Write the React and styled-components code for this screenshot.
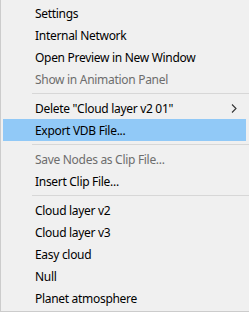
import React from "react";
import styled, { createGlobalStyle } from "styled-components";

const Global = createGlobalStyle`
  html, body { margin: 0; padding: 0; background: #f0f0f0; }
  body { font-family: "Noto Sans", "Open Sans", sans-serif; }
`;

const Menu = styled.div`
  width: 249px;
  height: 312px;
  box-sizing: border-box;
  background: #f0f0f0;
  border-left: 1px solid #cccccc;
  border-bottom: 1px solid #cccccc;
  padding: 2px 3px 2px 2px;
  display: flex;
  flex-direction: column;
`;

const Item = styled.div`
  height: 22px;
  display: flex;
  align-items: center;
  padding-left: 32px;
  padding-right: 8px;
  font-size: 12px;
  letter-spacing: -0.3px;
  color: ${(p) => (p.$disabled ? "#6d6d6d" : "#000000")};
  background: ${(p) => (p.$active ? "#91c9f7" : "transparent")};
  white-space: nowrap;
`;

const Label = styled.span`
  flex: 1;
`;

const Separator = styled.div`
  height: 7px;
  display: flex;
  align-items: center;
  padding-left: 29px;
  margin-right: -3px;
  &::after {
    content: "";
    flex: 1;
    height: 1px;
    background: #d7d7d7;
  }
`;

const Chevron = () => (
  <svg width="6" height="9" viewBox="0 0 6 9" style={{ marginRight: 1 }}>
    <path d="M1 0.5 L5 4.5 L1 8.5" fill="none" stroke="#333" strokeWidth="1.1" />
  </svg>
);

const items = [
  { t: "Settings" },
  { t: "Internal Network" },
  { t: "Open Preview in New Window" },
  { t: "Show in Animation Panel", d: true },
  { sep: true },
  { t: 'Delete "Cloud layer v2 01"', sub: true },
  { t: "Export VDB File...", a: true },
  { sep: true },
  { t: "Save Nodes as Clip File...", d: true },
  { t: "Insert Clip File..." },
  { sep: true },
  { t: "Cloud layer v2" },
  { t: "Cloud layer v3" },
  { t: "Easy cloud" },
  { t: "Null" },
  { t: "Planet atmosphere" },
];

export default function App() {
  return (
    <>
      <Global />
      <Menu>
        {items.map((it, i) =>
          it.sep ? (
            <Separator key={i} />
          ) : (
            <Item key={i} $disabled={it.d} $active={it.a}>
              <Label>{it.t}</Label>
              {it.sub && <Chevron />}
            </Item>
          )
        )}
      </Menu>
    </>
  );
}
